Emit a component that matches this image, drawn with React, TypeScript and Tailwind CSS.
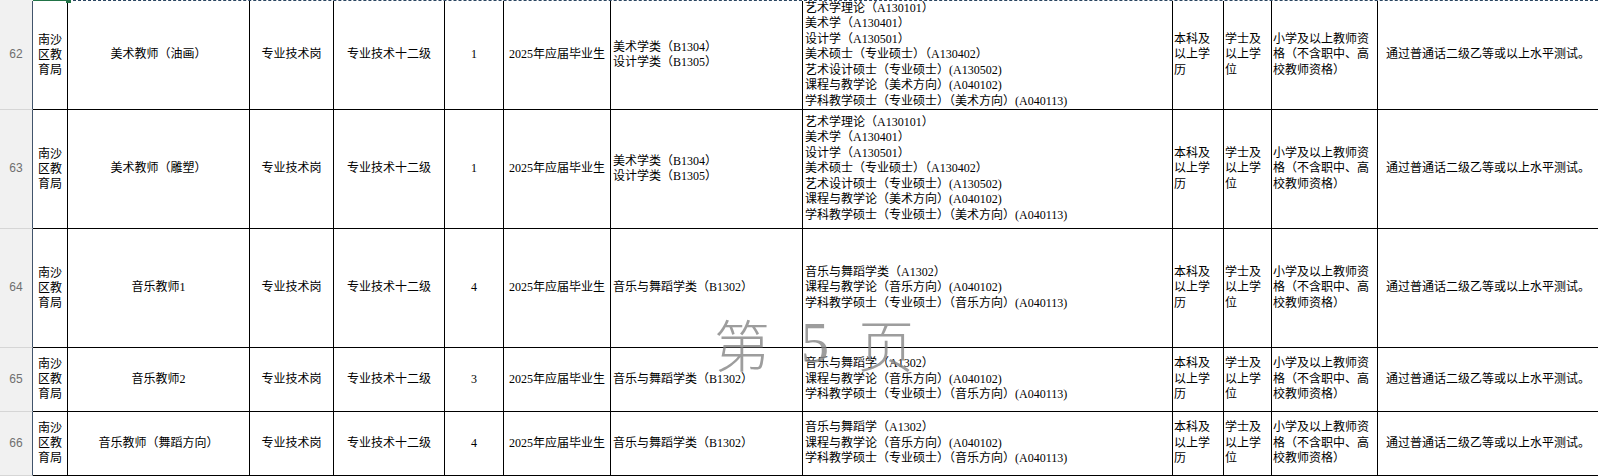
import type { ReactNode } from "react";

// column boundaries measured off the sheet: row header, then A..L
const cols =
  "grid grid-cols-[33px_35px_182px_84px_111px_59px_107px_192px_370px_51px_48px_106px_220px]";

const artMajors = [
  "艺术学理论（A130101）",
  "美术学（A130401）",
  "设计学（A130501）",
  "美术硕士（专业硕士）（A130402）",
  "艺术设计硕士（专业硕士）(A130502)",
  "课程与教学论（美术方向）(A040102)",
  "学科教学硕士（专业硕士）（美术方向）(A040113)",
];

const musicMajors = (first: string) => [
  first,
  "课程与教学论（音乐方向）(A040102)",
  "学科教学硕士（专业硕士）（音乐方向）(A040113)",
];

interface Row {
  no: number;
  height: string;
  post: string;
  count: string;
  undergrad: string[];
  grad: string[];
}

const rows: Row[] = [
  {
    no: 62,
    height: "h-[109px]",
    post: "美术教师（油画）",
    count: "1",
    undergrad: ["美术学类（B1304）", "设计学类（B1305）"],
    grad: artMajors,
  },
  {
    no: 63,
    height: "h-[119px]",
    post: "美术教师（雕塑）",
    count: "1",
    undergrad: ["美术学类（B1304）", "设计学类（B1305）"],
    grad: artMajors,
  },
  {
    no: 64,
    height: "h-[119px]",
    post: "音乐教师1",
    count: "4",
    undergrad: ["音乐与舞蹈学类（B1302）"],
    grad: musicMajors("音乐与舞蹈学类（A1302）"),
  },
  {
    no: 65,
    height: "h-[64px]",
    post: "音乐教师2",
    count: "3",
    undergrad: ["音乐与舞蹈学类（B1302）"],
    grad: musicMajors("音乐与舞蹈学（A1302）"),
  },
  {
    no: 66,
    height: "h-[64px]",
    post: "音乐教师（舞蹈方向）",
    count: "4",
    undergrad: ["音乐与舞蹈学类（B1302）"],
    grad: musicMajors("音乐与舞蹈学（A1302）"),
  },
];

function Cell({
  children,
  align = "center",
  last = false,
}: {
  children: ReactNode;
  align?: "center" | "left";
  last?: boolean;
}) {
  return (
    <div
      className={`flex items-center overflow-hidden border-b border-black ${
        last ? "" : "border-r"
      } ${align === "center" ? "justify-center text-center" : "justify-start pl-[1px] text-left"}`}
    >
      <div className="whitespace-nowrap">{children}</div>
    </div>
  );
}

function Lines({ items }: { items: string[] }) {
  return (
    <>
      {items.map((t) => (
        <div key={t}>{t}</div>
      ))}
    </>
  );
}

function SheetRow({ row }: { row: Row }) {
  return (
    <div className={`${cols} ${row.height}`}>
      <div className="flex items-center justify-center border-b border-r border-b-[#d6d6d6] border-r-[#41546b] bg-[#f1f1f1] font-['Liberation_Sans',sans-serif] text-[12px] text-[#6f6f6f]">
        {row.no}
      </div>
      <Cell>
        <div className="leading-[15px]">
          <Lines items={["南沙", "区教", "育局"]} />
        </div>
      </Cell>
      <Cell>{row.post}</Cell>
      <Cell>专业技术岗</Cell>
      <Cell>专业技术十二级</Cell>
      <Cell>{row.count}</Cell>
      <Cell>2025年应届毕业生</Cell>
      <Cell align="left">
        <div className="pl-[1px]">
          <Lines items={row.undergrad} />
        </div>
      </Cell>
      <Cell align="left">
        <div className="pl-[1px]">
          <Lines items={row.grad} />
        </div>
      </Cell>
      <Cell align="left">
        <Lines items={["本科及", "以上学", "历"]} />
      </Cell>
      <Cell align="left">
        <Lines items={["学士及", "以上学", "位"]} />
      </Cell>
      <Cell align="left">
        <Lines items={["小学及以上教师资", "格（不含职中、高", "校教师资格）"]} />
      </Cell>
      <Cell last>通过普通话二级乙等或以上水平测试。</Cell>
    </div>
  );
}

export default function App() {
  return (
    <div className="relative h-[476px] w-[1598px] overflow-hidden bg-white font-['Liberation_Serif','Noto_Sans_CJK_SC',serif] text-[12px] leading-[15.5px] text-black">
      {/* copy marquee along the top edge */}
      <div className="flex h-px">
        <div className="w-[33px] bg-[#f1f1f1]" />
        <div className="w-[35px] bg-[#217346]" />
        <div className="flex-1 border-t border-dashed border-[#2a4561]" />
      </div>
      {rows.map((r) => (
        <SheetRow key={r.no} row={r} />
      ))}

      <div className="absolute left-[66px] top-[-2px] h-[5px] w-[5px] bg-[#217346]" />

      {/* page watermark */}
      <div className="pointer-events-none absolute left-[714px] top-[315px] flex items-start font-['Noto_Sans_CJK_SC',sans-serif] text-[56px] font-light leading-none text-[#858585] opacity-80">
        <span>第</span>
        <span className="ml-[31px] font-['Liberation_Serif',serif]">5</span>
        <span className="ml-[29px]">页</span>
      </div>
    </div>
  );
}
